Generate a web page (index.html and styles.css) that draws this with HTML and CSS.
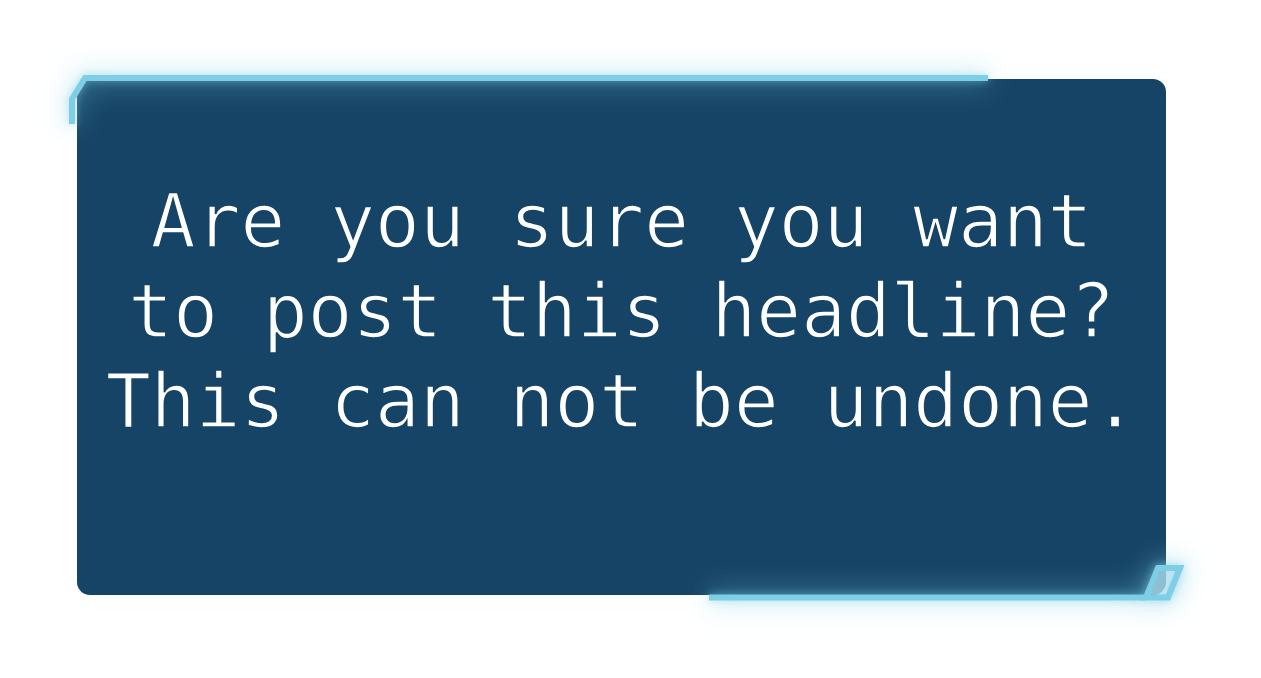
FILE: index.html
```html
<!DOCTYPE html>
<html lang="en">
<head>
<meta charset="utf-8">
<title>Confirm headline</title>
<link rel="stylesheet" href="styles.css">
</head>
<body>
<div class="stage">
  <div class="card">
    <p class="message">
      <span class="line">Are you sure you want</span>
      <span class="line">to post this headline?</span>
      <span class="line">This can not be undone.</span>
    </p>
    <svg class="frame" width="1089" height="516" aria-hidden="true">
      <path class="fill" d="M 1083 492 L 1098 492 L 1088 515.5 L 1073 515.5 Z" />
      <path class="bracket" d="M -5 45 L -5 20 L 8 -1 L 911 -1" />
      <path class="bracket" d="M 632 518.5 L 1069 518.5" />
      <path class="bracket" d="M 1081 489 L 1103 489 L 1091 518.5 L 1069 518.5 Z" />
    </svg>
  </div>
</div>
</body>
</html>
```
FILE: styles.css
```css
html, body {
  margin: 0;
  padding: 0;
  background: #ffffff;
}

.stage {
  padding: 79px 95px 83px 77px;
}

.card {
  position: relative;
  height: 516px;
  box-sizing: border-box;
  padding-top: 97px;
  background: #164467;
  border-radius: 16px 13px 13px 13px;
}

.message {
  margin: 0;
  color: #ffffff;
  font-family: "DejaVu Sans Mono", "Liberation Mono", monospace;
  font-size: 75px;
  line-height: 90px;
  letter-spacing: -0.3px;
  text-align: center;
  -webkit-text-stroke: 1.6px #164467;
}

.line {
  display: block;
  white-space: nowrap;
}

.frame {
  position: absolute;
  top: 0;
  left: 0;
  overflow: visible;
  pointer-events: none;
  filter: drop-shadow(0 0 4px rgba(126, 207, 229, 0.65)) drop-shadow(0 0 14px rgba(126, 207, 229, 0.7));
}

.fill {
  fill: rgba(200, 232, 242, 0.5);
}

.bracket {
  fill: none;
  stroke: #7ecfe5;
  stroke-width: 6;
  stroke-linejoin: miter;
  stroke-linecap: butt;
}
```
